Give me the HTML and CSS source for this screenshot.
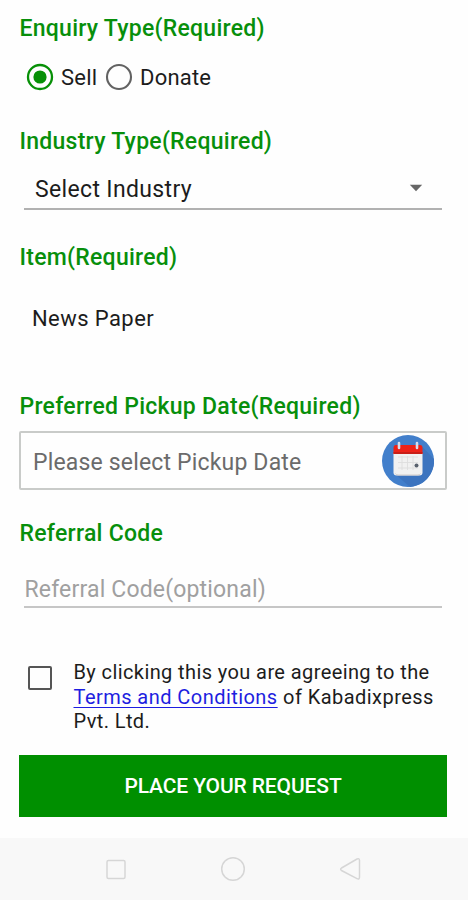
FILE: index.html
```html
<!DOCTYPE html>
<html lang="en">
<head>
<meta charset="utf-8">
<title>Pickup Request</title>
<link rel="stylesheet" href="styles.css">
</head>
<body>
<main class="form">
  <h2 class="label enquiry"><span>Enquiry Type(Required)</span></h2>
  <div class="radios">
    <svg class="radio" viewBox="0 0 28 28"><circle cx="14" cy="14" r="12" fill="none" stroke="#079007" stroke-width="2.3"/><circle cx="14" cy="14" r="6.6" fill="#079007"/></svg>
    <span class="option sell">Sell</span>
    <svg class="radio" viewBox="0 0 28 28"><circle cx="14" cy="14" r="12" fill="none" stroke="#626262" stroke-width="2.1"/></svg>
    <span class="option donate">Donate</span>
  </div>
  <h2 class="label industry"><span>Industry Type(Required)</span></h2>
  <div class="select"><span>Select Industry</span><svg class="caret" viewBox="0 0 14 8"><path d="M.8.8h12.4L7 7.3z" fill="#666"/></svg></div>
  <h2 class="label item"><span>Item(Required)</span></h2>
  <div class="item-value"><span>News Paper</span></div>
  <h2 class="label pickup"><span>Preferred Pickup Date(Required)</span></h2>
  <div class="date"><span>Please select Pickup Date</span>
    <svg class="calendar" viewBox="0 0 52 52">
      <circle cx="26" cy="26" r="26" fill="#427fcb"/>
      <path d="M40.5 12 52 24a26 26 0 0 1-24 28L13 39z" fill="#3c74bf"/>
      <path d="M11.5 18h29v19.500q0 3-3 3h-23q-3 0-3-3z" fill="#f1f1f1"/>
      <path d="M13.500 38.500q.8 1.500 2.500 1.500h20q1.700 0 2.500-1.500" fill="none" stroke="#d2ccc9" stroke-width="1"/>
      <path d="M14 10h24q2.500 0 2.500 3v6h-29v-6q0-3 2.500-3z" fill="#ed2219"/>
      <path d="M11.500 17h29v2h-29z" fill="#c91e17"/>
      <path d="M17 8v5M35 8v5" stroke="#d8dcec" stroke-width="2.600" stroke-linecap="round"/>
      <path d="M16 22h20M16 27.500h20M16 33h20M20 21v14M25.500 21v14M31 21v14" stroke="#dedede" stroke-width=".9"/>
      <circle cx="34.500" cy="30.500" r="2" fill="#59616d"/>
    </svg>
  </div>
  <h2 class="label referral"><span>Referral Code</span></h2>
  <div class="input"><span>Referral Code(optional)</span></div>
  <div class="agreement">
    <span class="checkbox"></span>
    <p class="terms"><span class="line first">By clicking this you are agreeing to the</span><span class="line second"><a>Terms and Conditions</a> of Kabadixpress</span><span class="line third">Pvt. Ltd.</span></p>
  </div>
  <div class="submit"><span>PLACE YOUR REQUEST</span></div>
</main>
<nav class="nav">
  <svg viewBox="0 0 26 26"><rect x="4" y="4.500" width="18" height="18" rx="1.500"/></svg>
  <svg viewBox="0 0 26 26"><circle cx="13" cy="13" r="11.300"/></svg>
  <svg viewBox="0 0 26 26"><path d="M3.500 12 19 3Q21.500 1.800 21.500 4.500V21Q21.500 24 19 22.700L3.500 14.500Q1.800 13.200 3.500 12z"/></svg>
</nav>
</body>
</html>
```
FILE: styles.css
```css
* { box-sizing: border-box; }
body {
  margin: 0;
  width: 468px;
  height: 900px;
  overflow: hidden;
  display: flex;
  flex-direction: column;
  background: #fefefe;
  color: #1c1c1c;
  font: 400 22px/30px Roboto, sans-serif;
  white-space: nowrap;
}
.form { height: 838px; padding: 13px 21px 0 19px; display: flex; flex-direction: column; }
.label { margin: 0; height: 30px; flex: none; padding-left: .5px; font-size: 23px; line-height: 32px; font-weight: 500; color: #078f0b; letter-spacing: .26px; }
.radios { display: flex; align-items: center; height: 40px; margin: 14px 0 29px 7px; }
.radio { width: 28px; height: 28px; flex: none; }
.option { margin-left: 7px; padding-top: 2px; letter-spacing: .2px; }
.sell { width: 37px; margin-right: 7px; }
.select { height: 42px; margin: 12px 5px 32px; padding: 0 19px 0 11px; display: flex; align-items: center; justify-content: space-between; border-bottom: 2px solid #b1b1b1; font-size: 23px; letter-spacing: .35px; }
.select span { padding-top: 4px; }
.caret { width: 14px; height: 8px; }
.item-value { height: 30px; margin: 31px 0 58px 13px; line-height: 32px; letter-spacing: .42px; }
.date { height: 59px; margin: 10px 0 28px; padding: 0 11px 0 12px; border: 2px solid #c9cbc9; border-radius: 2px; display: flex; align-items: center; justify-content: space-between; color: #6b6b6b; font-size: 23px; letter-spacing: .17px; }
.date span { padding-top: 5px; }
.calendar { width: 52px; height: 52px; }
.input { height: 43px; margin: 17px 5px 0; padding: 9px 0 0 .5px; border-bottom: 2px solid #c6c6c6; line-height: 32px; color: #a0a0a0; font-size: 23px; letter-spacing: .17px; }
.agreement { display: flex; margin-top: 52px; }
.checkbox { width: 24px; height: 24px; margin: 6px 21.500px 0 9px; border: 2px solid #555; border-radius: 2px; }
.terms { margin: 0; height: 74px; font-size: 20px; line-height: 24.500px; letter-spacing: .4px; }
.line { display: block; width: max-content; }
.second { letter-spacing: .45px; }
.terms a { color: #1d1de0; text-decoration: underline; text-decoration-thickness: 1px; text-underline-offset: 3px; }
.submit { height: 62px; margin-top: 21px; background: #008f00; color: #fff; font-size: 21px; line-height: 31px; letter-spacing: -.12px; font-weight: 500; display: flex; align-items: center; justify-content: center; }
.submit span { padding-top: 1px; }
.nav { height: 62px; background: #f8f8f8; display: flex; align-items: center; justify-content: center; gap: 91.500px; padding-right: 2px; }
.nav svg { width: 26px; height: 26px; fill: none; stroke: #d6d6d6; stroke-width: 1.500; }
```
